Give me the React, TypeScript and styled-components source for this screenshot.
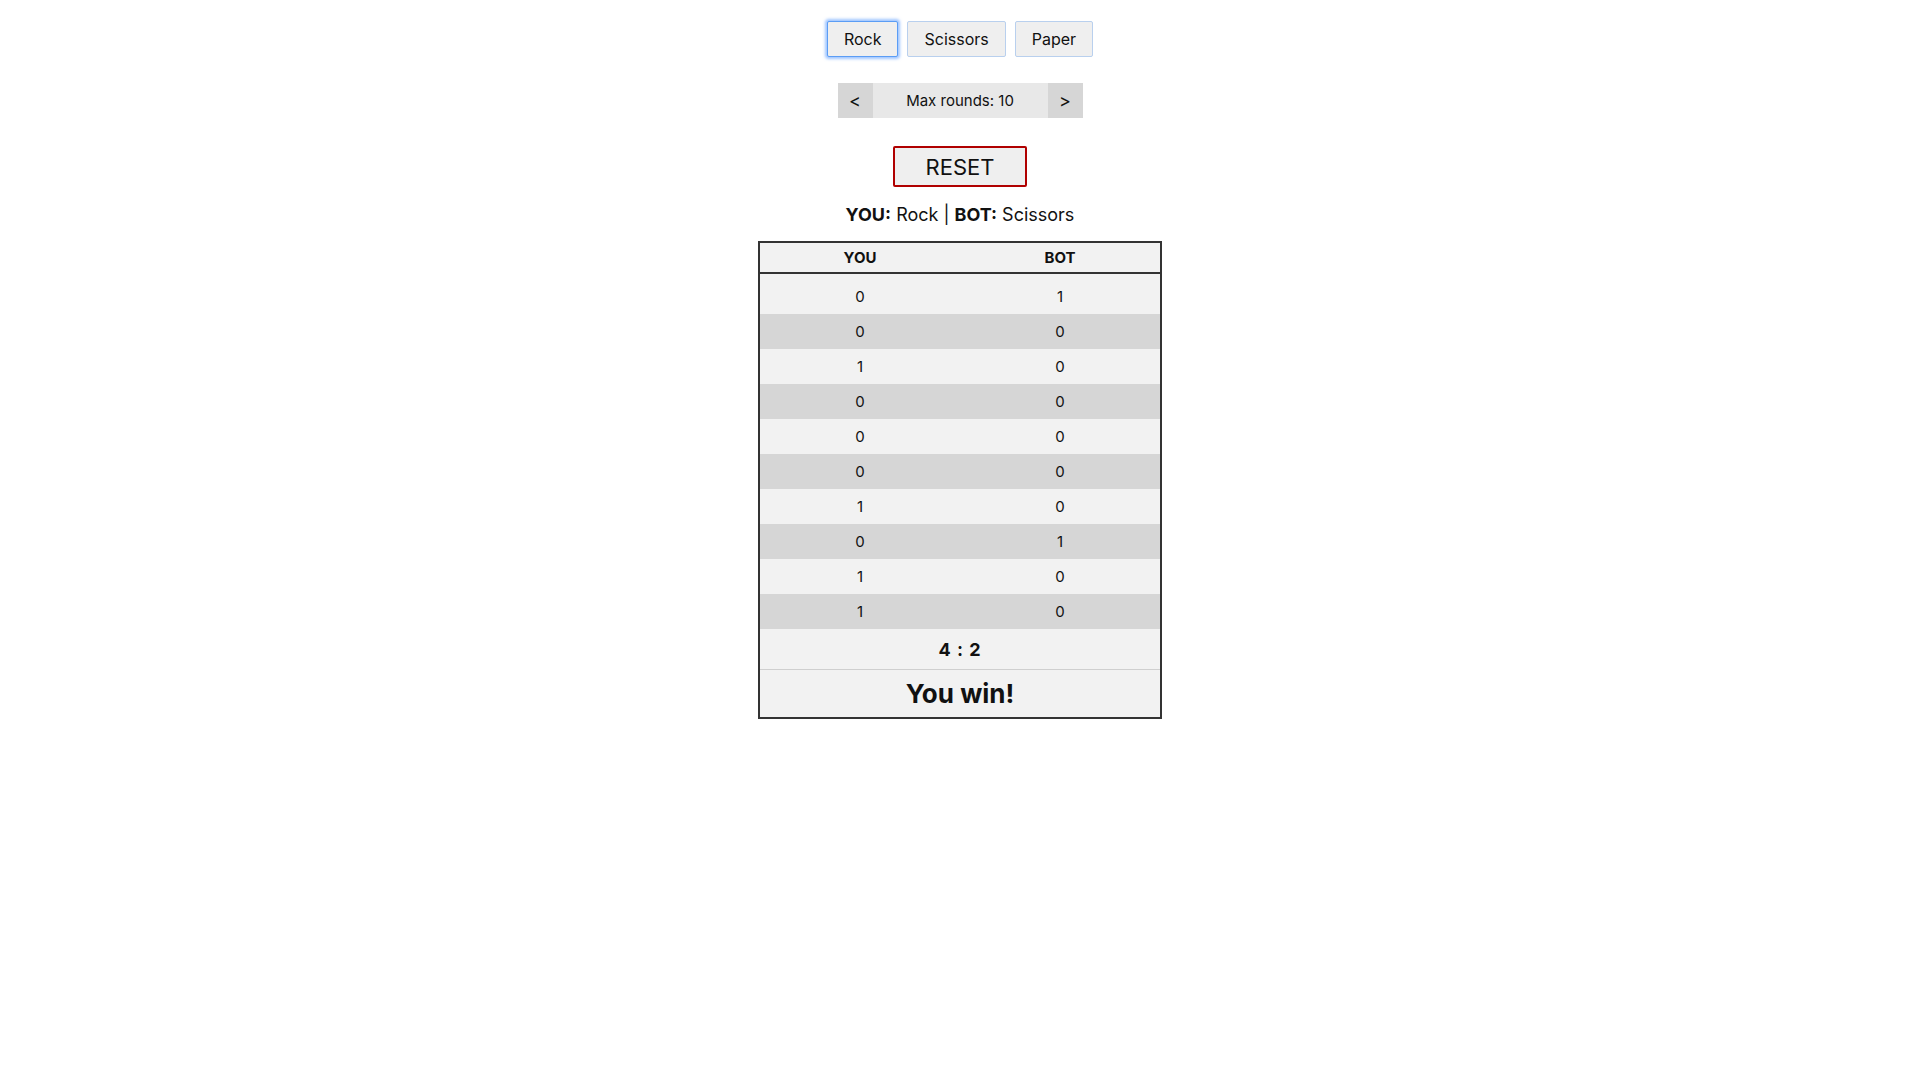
import React from "react";
import styled, { createGlobalStyle } from "styled-components";

const Global = createGlobalStyle`
  html, body { margin: 0; padding: 0; background: #fff; }
  body { font-family: "Inter", "Liberation Sans", sans-serif; color: #111; }
`;

const Page = styled.div`
  display: flex;
  flex-direction: column;
  align-items: center;
  padding-top: 21px;
`;

const ChoiceRow = styled.div`
  display: flex;
  gap: 9px;
`;

const ChoiceButton = styled.button<{ $active?: boolean }>`
  height: 36px;
  padding: 0 16px;
  font-family: inherit;
  font-size: 16px;
  color: #111;
  background: #efefef;
  border: 1px solid ${(p) => (p.$active ? "#5b9df5" : "#b9d0ee")};
  border-radius: 2px;
  box-shadow: ${(p) => (p.$active ? "0 0 3px 2px rgba(80,150,255,0.55)" : "none")};
  cursor: pointer;
`;

const RoundsBar = styled.div`
  display: flex;
  height: 35px;
  margin-top: 26px;
  background: #e8e8e8;
`;

const ArrowButton = styled.button`
  width: 35px;
  height: 35px;
  border: none;
  background: #d6d6d6;
  font-family: inherit;
  font-size: 18px;
  color: #111;
  padding: 0;
  cursor: pointer;
`;

const RoundsLabel = styled.div`
  width: 175px;
  display: flex;
  align-items: center;
  justify-content: center;
  font-size: 15px;
`;

const ResetButton = styled.button`
  margin-top: 28px;
  width: 134px;
  height: 41px;
  background: #efefef;
  border: 2px solid #b00000;
  border-radius: 2px;
  font-family: inherit;
  font-size: 22px;
  color: #111;
  cursor: pointer;
`;

const Status = styled.div`
  margin-top: 16px;
  font-size: 18px;
  line-height: 24px;
  b { font-weight: 700; }
`;

const Table = styled.table`
  margin-top: 14px;
  width: 404px;
  border-collapse: collapse;
  border: 2px solid #333;
  background: #f2f2f2;
  text-align: center;
`;

const HeadCell = styled.th`
  height: 29px;
  padding: 0;
  font-size: 15px;
  font-weight: 700;
  border-bottom: 2px solid #333;
  width: 50%;
`;

const Row = styled.tr<{ $dark: boolean; $first: boolean }>`
  background: ${(p) => (p.$dark ? "#d6d6d6" : "#f2f2f2")};
  td {
    height: ${(p) => (p.$first ? 41 : 35)}px;
    padding: ${(p) => (p.$first ? "5px 0 0" : "0")};
    box-sizing: border-box;
    font-size: 15px;
  }
`;

const ScoreCell = styled.td`
  height: 40px;
  padding: 0;
  font-size: 18px;
  font-weight: 700;
  letter-spacing: 1px;
  border-bottom: 1px solid #cfcfcf;
`;

const ResultCell = styled.td`
  height: 47px;
  padding: 0;
  font-size: 26px;
  font-weight: 700;
`;

const rounds: [number, number][] = [
  [0, 1],
  [0, 0],
  [1, 0],
  [0, 0],
  [0, 0],
  [0, 0],
  [1, 0],
  [0, 1],
  [1, 0],
  [1, 0],
];

export default function App() {
  return (
    <>
      <Global />
      <Page>
        <ChoiceRow>
          <ChoiceButton $active>Rock</ChoiceButton>
          <ChoiceButton>Scissors</ChoiceButton>
          <ChoiceButton>Paper</ChoiceButton>
        </ChoiceRow>
        <RoundsBar>
          <ArrowButton>&lt;</ArrowButton>
          <RoundsLabel>Max rounds: 10</RoundsLabel>
          <ArrowButton>&gt;</ArrowButton>
        </RoundsBar>
        <ResetButton>RESET</ResetButton>
        <Status>
          <b>YOU:</b> Rock | <b>BOT:</b> Scissors
        </Status>
        <Table>
          <thead>
            <tr>
              <HeadCell>YOU</HeadCell>
              <HeadCell>BOT</HeadCell>
            </tr>
          </thead>
          <tbody>
            {rounds.map(([a, b], i) => (
              <Row key={i} $dark={i % 2 === 1} $first={i === 0}>
                <td>{a}</td>
                <td>{b}</td>
              </Row>
            ))}
            <tr>
              <ScoreCell colSpan={2}>4 : 2</ScoreCell>
            </tr>
            <tr>
              <ResultCell colSpan={2}>You win!</ResultCell>
            </tr>
          </tbody>
        </Table>
      </Page>
    </>
  );
}
